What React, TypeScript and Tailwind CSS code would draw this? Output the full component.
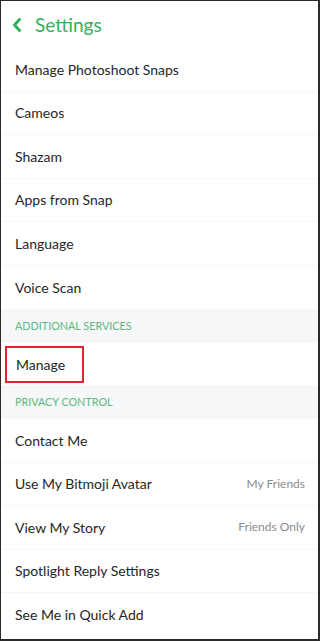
import React from 'react'

type Row = { label: string; value?: string }

const top: Row[] = [
  { label: 'Manage Photoshoot Snaps' },
  { label: 'Cameos' },
  { label: 'Shazam' },
  { label: 'Apps from Snap' },
  { label: 'Language' },
  { label: 'Voice Scan' },
]

const privacy: Row[] = [
  { label: 'Contact Me' },
  { label: 'Use My Bitmoji Avatar', value: 'My Friends' },
  { label: 'View My Story', value: 'Friends Only' },
  { label: 'Spotlight Reply Settings' },
  { label: 'See Me in Quick Add' },
]

function Item({ row, last }: { row: Row; last?: boolean }) {
  return (
    <div
      className={`flex items-center justify-between h-[43.5px] pl-[14px] pr-[13px] ${
        last ? '' : 'border-b border-[#f7f7f7]'
      }`}
    >
      <span className="text-[14px] text-[#262626]">{row.label}</span>
      {row.value && <span className="text-[12px] text-[#8a8a8a]">{row.value}</span>}
    </div>
  )
}

function Section({ title }: { title: string }) {
  return (
    <div className="flex items-center h-[34px] pl-[14px] bg-[#f5f7f9]">
      <span className="text-[10.8px] text-[#5cb97c]">{title}</span>
    </div>
  )
}

export default function App() {
  return (
    <div
      className="w-[320px] h-[641px] bg-white overflow-hidden border-t border-l border-r-2 border-b-2 border-[#2a2a2a]"
      style={{ fontFamily: 'Lato, "Open Sans", sans-serif' }}
    >
      <div className="flex items-center h-[47px] pl-[11px] gap-[13px]">
        <svg width="10" height="14" viewBox="0 0 10 14" fill="none">
          <path d="M7.5 1.5 L2.5 7 L7.5 12.5" stroke="#2fb35a" strokeWidth="3" strokeLinecap="round" strokeLinejoin="round" />
        </svg>
        <span className="text-[19px] text-[#2fb35a] leading-none">Settings</span>
      </div>
      {top.map((r, i) => (
        <Item key={r.label} row={r} last={i === top.length - 1} />
      ))}
      <Section title="ADDITIONAL SERVICES" />
      <div className="flex items-center h-[42px] pl-[4px]">
        <div className="flex items-center h-[37px] w-[79px] pl-[9px] border-2 border-[#d8262e]">
          <span className="text-[14px] text-[#262626]">Manage</span>
        </div>
      </div>
      <Section title="PRIVACY CONTROL" />
      {privacy.map((r, i) => (
        <Item key={r.label} row={r} last={i === privacy.length - 1} />
      ))}
    </div>
  )
}
